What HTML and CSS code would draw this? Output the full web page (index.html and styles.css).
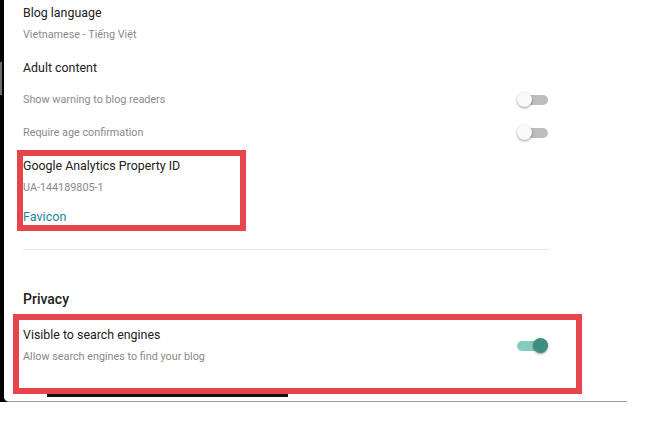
FILE: index.html
```html
<!DOCTYPE html>
<html lang="en">
<head>
<meta charset="utf-8">
<title>Blog settings</title>
<link rel="stylesheet" href="styles.css">
</head>
<body>
<div class="frame">
  <div class="edge"><span class="edge-mark"></span></div>
  <main class="panel">
    <div class="content">
      <section class="group group-language">
        <h3 class="title">Blog language</h3>
        <p class="sub">Vietnamese - Tiếng Việt</p>
      </section>

      <section class="group group-adult">
        <h3 class="title">Adult content</h3>
        <div class="row">
          <p class="sub">Show warning to blog readers</p>
          <span class="toggle"><span class="thumb"></span></span>
        </div>
        <div class="row">
          <p class="sub">Require age confirmation</p>
          <span class="toggle"><span class="thumb"></span></span>
        </div>
      </section>

      <section class="group group-analytics">
        <h3 class="title">Google Analytics Property ID</h3>
        <p class="sub sub-id">UA-144189805-1</p>
        <a class="link" href="#">Favicon</a>
      </section>

      <hr class="divider">

      <section class="group group-privacy">
        <h2 class="heading">Privacy</h2>
        <div class="row row-privacy">
          <div class="text">
            <h3 class="title">Visible to search engines</h3>
            <p class="sub sub-allow">Allow search engines to find your blog</p>
          </div>
          <span class="toggle on"><span class="thumb"></span></span>
        </div>
      </section>
    </div>

    <div class="mark mark-analytics"></div>
    <div class="mark mark-privacy"></div>
    <div class="underbar"></div>
  </main>
</div>
</body>
</html>
```

FILE: styles.css
```css
* { box-sizing: border-box; }

html, body {
  margin: 0;
  padding: 0;
  background: #ffffff;
}

body {
  font-family: Roboto, "Noto Sans", "Liberation Sans", sans-serif;
  color: #212121;
}

.frame {
  display: flex;
  width: 627px;
  height: 402px;
  background: #000000;
}

.edge {
  width: 4px;
  flex: none;
  position: relative;
}

.edge-mark {
  position: absolute;
  left: 0;
  top: 62px;
  width: 2px;
  height: 33px;
  background: #6d6d6d;
}

.panel {
  position: relative;
  flex: 1;
  background: #ffffff;
  border-bottom: 1px solid #9e9e9e;
  border-bottom-left-radius: 5px;
}

.content {
  width: 525px;
  margin-left: 19px;
  display: flex;
  flex-direction: column;
}

.group { margin: 0; }

.title {
  margin: 0;
  font-size: 12.4px;
  line-height: 16px;
  font-weight: 400;
  color: #212121;
}

.sub {
  margin: 0;
  font-size: 10.8px;
  line-height: 14px;
  color: #8a8a8a;
}

.group-language { padding-top: 5.2px; }
.group-language .sub { margin-top: 6.5px; }

.group-adult { margin-top: 18.5px; }
.group-adult .title { margin-bottom: 7.5px; }

.row {
  display: flex;
  align-items: center;
  justify-content: space-between;
  height: 33px;
}

.group-analytics { margin-top: 8px; display: flex; flex-direction: column; align-items: flex-start; }
.group-analytics .sub-id { margin-top: 7.5px; }

.link {
  margin-top: 14.3px;
  font-size: 12.6px;
  line-height: 16px;
  color: #23879a;
  text-decoration: none;
}

.divider {
  margin: 23.7px 0 0;
  border: 0;
  height: 1px;
  background: #e4e4e4;
}

.group-privacy { margin-top: 39.5px; }

.heading {
  margin: 0;
  font-size: 14px;
  line-height: 18px;
  font-weight: 500;
  color: #212121;
}

.row-privacy {
  height: auto;
  margin-top: 19.5px;
}

.sub-allow { margin-top: 7.3px; }

.toggle {
  position: relative;
  width: 31px;
  height: 16px;
  flex: none;
  display: flex;
  align-items: center;
}

.toggle::before {
  content: "";
  position: absolute;
  left: 3px;
  right: 0;
  top: 3px;
  height: 10px;
  border-radius: 5px;
  background: #bdbdbd;
}

.thumb {
  position: absolute;
  left: 0;
  top: 0;
  width: 15px;
  height: 15px;
  border-radius: 50%;
  background: #fafafa;
  box-shadow: 0 1px 2.5px rgba(0, 0, 0, 0.4);
}

.toggle.on::before {
  left: 0;
  right: 3px;
  background: #86cbbf;
}

.toggle.on .thumb {
  left: auto;
  right: 0;
  background: #3a8f7f;
}

.mark {
  position: absolute;
  border: 6px solid #e7444c;
}

.mark-analytics {
  left: 13px;
  top: 150px;
  width: 229px;
  height: 81px;
}

.mark-privacy {
  left: 9px;
  top: 313.5px;
  width: 569px;
  height: 80.5px;
}

.underbar {
  position: absolute;
  left: 43px;
  top: 394px;
  width: 241px;
  height: 2.5px;
  background: #111111;
}
```
